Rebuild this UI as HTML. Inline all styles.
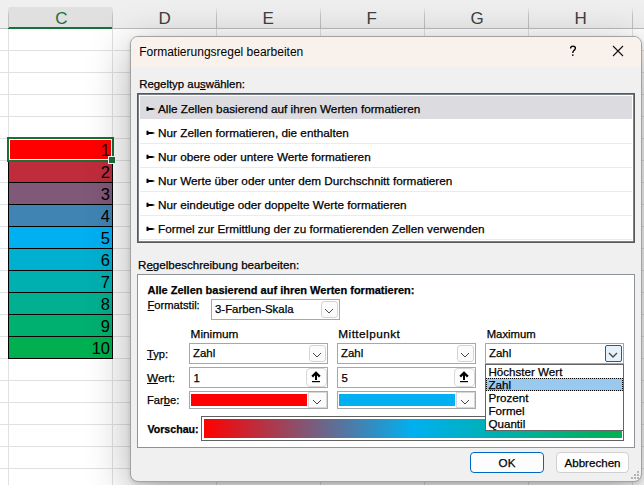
<!DOCTYPE html>
<html><head><meta charset="utf-8"><style>
html,body{margin:0;padding:0;width:644px;height:485px;overflow:hidden;background:#fff;position:relative}
div{position:absolute}
.t{white-space:pre;font-family:"Liberation Sans",sans-serif;-webkit-text-stroke:0.25px currentColor}
u{text-decoration:underline;text-underline-offset:0.5px}
</style></head><body>
<div style="left:0px;top:0px;width:644px;height:29px;background:#efefef"></div>
<div style="left:8px;top:7px;width:104px;height:20px;background:#e0e0e0"></div>
<div style="left:8px;top:27px;width:104px;height:2px;background:#137339"></div>
<div style="left:8px;top:7px;width:1px;height:21px;background:linear-gradient(#efefef,#c4c4c4 40%,#bdbdbd)"></div>
<div style="left:112px;top:7px;width:1px;height:21px;background:linear-gradient(#efefef,#c4c4c4 40%,#bdbdbd)"></div>
<div style="left:216px;top:7px;width:1px;height:21px;background:linear-gradient(#efefef,#c4c4c4 40%,#bdbdbd)"></div>
<div style="left:320px;top:7px;width:1px;height:21px;background:linear-gradient(#efefef,#c4c4c4 40%,#bdbdbd)"></div>
<div style="left:424px;top:7px;width:1px;height:21px;background:linear-gradient(#efefef,#c4c4c4 40%,#bdbdbd)"></div>
<div style="left:528px;top:7px;width:1px;height:21px;background:linear-gradient(#efefef,#c4c4c4 40%,#bdbdbd)"></div>
<div style="left:632px;top:7px;width:1px;height:21px;background:linear-gradient(#efefef,#c4c4c4 40%,#bdbdbd)"></div>
<div style="left:0px;top:28px;width:8px;height:1px;background:#bdbdbd"></div>
<div style="left:112px;top:28px;width:532px;height:1px;background:#bdbdbd"></div>
<div class="t" style="left:55.3px;top:8.46px;font-size:17px;line-height:22.1px;font-weight:normal;color:#1e6e3c;letter-spacing:0px;-webkit-text-stroke:0">C</div>
<div class="t" style="left:158.5px;top:8.46px;font-size:17px;line-height:22.1px;font-weight:normal;color:#404040;letter-spacing:0px;-webkit-text-stroke:0">D</div>
<div class="t" style="left:262.5px;top:8.46px;font-size:17px;line-height:22.1px;font-weight:normal;color:#404040;letter-spacing:0px;-webkit-text-stroke:0">E</div>
<div class="t" style="left:366.5px;top:8.46px;font-size:17px;line-height:22.1px;font-weight:normal;color:#404040;letter-spacing:0px;-webkit-text-stroke:0">F</div>
<div class="t" style="left:470.5px;top:8.46px;font-size:17px;line-height:22.1px;font-weight:normal;color:#404040;letter-spacing:0px;-webkit-text-stroke:0">G</div>
<div class="t" style="left:574.5px;top:8.46px;font-size:17px;line-height:22.1px;font-weight:normal;color:#404040;letter-spacing:0px;-webkit-text-stroke:0">H</div>
<div style="left:8px;top:29px;width:1px;height:456px;background:#e1e1e1"></div>
<div style="left:112px;top:29px;width:1px;height:456px;background:#e1e1e1"></div>
<div style="left:216px;top:29px;width:1px;height:456px;background:#e1e1e1"></div>
<div style="left:320px;top:29px;width:1px;height:456px;background:#e1e1e1"></div>
<div style="left:424px;top:29px;width:1px;height:456px;background:#e1e1e1"></div>
<div style="left:528px;top:29px;width:1px;height:456px;background:#e1e1e1"></div>
<div style="left:632px;top:29px;width:1px;height:456px;background:#e1e1e1"></div>
<div style="left:0px;top:50px;width:644px;height:1px;background:#e1e1e1"></div>
<div style="left:0px;top:72px;width:644px;height:1px;background:#e1e1e1"></div>
<div style="left:0px;top:94px;width:644px;height:1px;background:#e1e1e1"></div>
<div style="left:0px;top:116px;width:644px;height:1px;background:#e1e1e1"></div>
<div style="left:0px;top:138px;width:644px;height:1px;background:#e1e1e1"></div>
<div style="left:0px;top:160px;width:644px;height:1px;background:#e1e1e1"></div>
<div style="left:0px;top:182px;width:644px;height:1px;background:#e1e1e1"></div>
<div style="left:0px;top:204px;width:644px;height:1px;background:#e1e1e1"></div>
<div style="left:0px;top:226px;width:644px;height:1px;background:#e1e1e1"></div>
<div style="left:0px;top:248px;width:644px;height:1px;background:#e1e1e1"></div>
<div style="left:0px;top:270px;width:644px;height:1px;background:#e1e1e1"></div>
<div style="left:0px;top:292px;width:644px;height:1px;background:#e1e1e1"></div>
<div style="left:0px;top:314px;width:644px;height:1px;background:#e1e1e1"></div>
<div style="left:0px;top:336px;width:644px;height:1px;background:#e1e1e1"></div>
<div style="left:0px;top:358px;width:644px;height:1px;background:#e1e1e1"></div>
<div style="left:0px;top:380px;width:644px;height:1px;background:#e1e1e1"></div>
<div style="left:0px;top:402px;width:644px;height:1px;background:#e1e1e1"></div>
<div style="left:0px;top:424px;width:644px;height:1px;background:#e1e1e1"></div>
<div style="left:0px;top:446px;width:644px;height:1px;background:#e1e1e1"></div>
<div style="left:0px;top:468px;width:644px;height:1px;background:#e1e1e1"></div>
<div style="left:8px;top:138px;width:105px;height:23px;background:#ff0000;box-sizing:border-box;border:1px solid #000"></div>
<div class="t" style="left:8px;top:139.78px;width:102px;text-align:right;font-size:16.5px;line-height:21px;color:#000;-webkit-text-stroke:0">1</div>
<div style="left:8px;top:160px;width:105px;height:23px;background:#bf2c3c;box-sizing:border-box;border:1px solid #000"></div>
<div class="t" style="left:8px;top:161.78px;width:102px;text-align:right;font-size:16.5px;line-height:21px;color:#000;-webkit-text-stroke:0">2</div>
<div style="left:8px;top:182px;width:105px;height:23px;background:#805878;box-sizing:border-box;border:1px solid #000"></div>
<div class="t" style="left:8px;top:183.78px;width:102px;text-align:right;font-size:16.5px;line-height:21px;color:#000;-webkit-text-stroke:0">3</div>
<div style="left:8px;top:204px;width:105px;height:23px;background:#4084b4;box-sizing:border-box;border:1px solid #000"></div>
<div class="t" style="left:8px;top:205.78px;width:102px;text-align:right;font-size:16.5px;line-height:21px;color:#000;-webkit-text-stroke:0">4</div>
<div style="left:8px;top:226px;width:105px;height:23px;background:#00b0f0;box-sizing:border-box;border:1px solid #000"></div>
<div class="t" style="left:8px;top:227.78px;width:102px;text-align:right;font-size:16.5px;line-height:21px;color:#000;-webkit-text-stroke:0">5</div>
<div style="left:8px;top:248px;width:105px;height:23px;background:#00b0d0;box-sizing:border-box;border:1px solid #000"></div>
<div class="t" style="left:8px;top:249.78px;width:102px;text-align:right;font-size:16.5px;line-height:21px;color:#000;-webkit-text-stroke:0">6</div>
<div style="left:8px;top:270px;width:105px;height:23px;background:#00b0b0;box-sizing:border-box;border:1px solid #000"></div>
<div class="t" style="left:8px;top:271.78px;width:102px;text-align:right;font-size:16.5px;line-height:21px;color:#000;-webkit-text-stroke:0">7</div>
<div style="left:8px;top:292px;width:105px;height:23px;background:#00b090;box-sizing:border-box;border:1px solid #000"></div>
<div class="t" style="left:8px;top:293.78px;width:102px;text-align:right;font-size:16.5px;line-height:21px;color:#000;-webkit-text-stroke:0">8</div>
<div style="left:8px;top:314px;width:105px;height:23px;background:#00b070;box-sizing:border-box;border:1px solid #000"></div>
<div class="t" style="left:8px;top:315.78px;width:102px;text-align:right;font-size:16.5px;line-height:21px;color:#000;-webkit-text-stroke:0">9</div>
<div style="left:8px;top:336px;width:105px;height:23px;background:#00b050;box-sizing:border-box;border:1px solid #000"></div>
<div class="t" style="left:8px;top:337.78px;width:102px;text-align:right;font-size:16.5px;line-height:21px;color:#000;-webkit-text-stroke:0">10</div>
<div style="left:7px;top:137px;width:107px;height:25px;box-sizing:border-box;border:2px solid #137339"></div>
<div style="left:9px;top:139px;width:103px;height:21px;box-sizing:border-box;border:1px solid #fff"></div>
<div style="left:109px;top:157px;width:6px;height:6px;background:#137339;outline:1px solid #fff"></div>
<div style="left:130px;top:36px;width:512px;height:446px;border-radius:8px;box-shadow:0 10px 44px rgba(0,0,0,0.32),0 2px 4px rgba(0,0,0,0.14);background:#f0f0f0;box-sizing:border-box;border:1px solid #a2a2a2;overflow:hidden"><div style="left:0;top:0;width:510px;height:30px;background:#f9f1ec"></div></div>
<div class="t" style="left:139.2px;top:45.04px;font-size:12px;line-height:15.6px;font-weight:normal;color:#000;letter-spacing:0px;-webkit-text-stroke:0">Formatierungsregel bearbeiten</div>
<svg style="position:absolute;left:569px;top:45px" width="9" height="12" viewBox="0 0 9 12"><path d="M1.6 3.4C1.6 2 2.6 1.1 3.9 1.1C5.3 1.1 6.4 2 6.4 3.3C6.4 4.5 5.6 5 4.9 5.6C4.2 6.2 3.8 6.7 3.8 7.9" stroke="#000" stroke-width="1.35" fill="none"/><circle cx="3.8" cy="10.1" r="0.85" fill="#000"/></svg>
<svg style="position:absolute;left:612px;top:45px" width="12" height="12" viewBox="0 0 12 12"><path d="M1 1L11 11M11 1L1 11" stroke="#111" stroke-width="1.1" fill="none"/></svg>
<div class="t" style="left:139.2px;top:76.64px;font-size:11.4px;line-height:14.82px;font-weight:normal;color:#000;letter-spacing:0px;">Regeltyp au<u>s</u>wählen:</div>
<div style="left:137px;top:93px;width:498px;height:150px;box-sizing:border-box;border:1px solid #585858;box-shadow:inset 0 0 0 1px #7a8088;background:#fff"></div>
<div style="left:140px;top:96px;width:492px;height:23px;background:#dcdce0"></div>
<svg style="position:absolute;left:146px;top:106px" width="10" height="6" viewBox="0 0 10 6"><path d="M0.5 0.8H2.5V2.05H6.2L9.4 2.9V3.1L6.2 3.95H2.5V5.1H0.5Z" fill="#000"/></svg>
<div class="t" style="left:158px;top:100.69px;font-size:11.75px;line-height:15.28px;font-weight:normal;color:#000;letter-spacing:0px;">Alle Zellen basierend auf ihren Werten formatieren</div>
<div style="left:140px;top:143px;width:492px;height:1px;background:#ebebeb"></div>
<svg style="position:absolute;left:146px;top:130px" width="10" height="6" viewBox="0 0 10 6"><path d="M0.5 0.8H2.5V2.05H6.2L9.4 2.9V3.1L6.2 3.95H2.5V5.1H0.5Z" fill="#000"/></svg>
<div class="t" style="left:158px;top:124.69px;font-size:11.75px;line-height:15.28px;font-weight:normal;color:#000;letter-spacing:0px;">Nur Zellen formatieren, die enthalten</div>
<div style="left:140px;top:167px;width:492px;height:1px;background:#ebebeb"></div>
<svg style="position:absolute;left:146px;top:154px" width="10" height="6" viewBox="0 0 10 6"><path d="M0.5 0.8H2.5V2.05H6.2L9.4 2.9V3.1L6.2 3.95H2.5V5.1H0.5Z" fill="#000"/></svg>
<div class="t" style="left:158px;top:148.69px;font-size:11.75px;line-height:15.28px;font-weight:normal;color:#000;letter-spacing:0px;">Nur obere oder untere Werte formatieren</div>
<div style="left:140px;top:191px;width:492px;height:1px;background:#ebebeb"></div>
<svg style="position:absolute;left:146px;top:178px" width="10" height="6" viewBox="0 0 10 6"><path d="M0.5 0.8H2.5V2.05H6.2L9.4 2.9V3.1L6.2 3.95H2.5V5.1H0.5Z" fill="#000"/></svg>
<div class="t" style="left:158px;top:172.69px;font-size:11.75px;line-height:15.28px;font-weight:normal;color:#000;letter-spacing:0px;">Nur Werte über oder unter dem Durchschnitt formatieren</div>
<div style="left:140px;top:215px;width:492px;height:1px;background:#ebebeb"></div>
<svg style="position:absolute;left:146px;top:202px" width="10" height="6" viewBox="0 0 10 6"><path d="M0.5 0.8H2.5V2.05H6.2L9.4 2.9V3.1L6.2 3.95H2.5V5.1H0.5Z" fill="#000"/></svg>
<div class="t" style="left:158px;top:196.69px;font-size:11.75px;line-height:15.28px;font-weight:normal;color:#000;letter-spacing:0px;">Nur eindeutige oder doppelte Werte formatieren</div>
<div style="left:140px;top:239px;width:492px;height:1px;background:#ebebeb"></div>
<svg style="position:absolute;left:146px;top:226px" width="10" height="6" viewBox="0 0 10 6"><path d="M0.5 0.8H2.5V2.05H6.2L9.4 2.9V3.1L6.2 3.95H2.5V5.1H0.5Z" fill="#000"/></svg>
<div class="t" style="left:158px;top:220.69px;font-size:11.75px;line-height:15.28px;font-weight:normal;color:#000;letter-spacing:0px;">Formel zur Ermittlung der zu formatierenden Zellen verwenden</div>
<div class="t" style="left:138px;top:256.64px;font-size:11.6px;line-height:15.08px;font-weight:normal;color:#000;letter-spacing:0px;">R<u>e</u>gelbeschreibung bearbeiten:</div>
<div style="left:137px;top:274px;width:498px;height:174px;box-sizing:border-box;border:1px solid #8e939a;background:#fff"></div>
<div class="t" style="left:147.5px;top:282.54px;font-size:11px;line-height:14.3px;font-weight:bold;color:#000;letter-spacing:0px;">Alle Zellen basierend auf ihren Werten formatieren:</div>
<div class="t" style="left:147.5px;top:298.34px;font-size:11.2px;line-height:14.56px;font-weight:normal;color:#000;letter-spacing:0px;"><u>F</u>ormatstil:</div>
<div style="left:211px;top:299px;width:129px;height:21px;box-sizing:border-box;border:1px solid #a6a6ae;background:#fff"></div>
<div class="t" style="left:215px;top:301.84px;font-size:11.4px;line-height:14.82px;font-weight:normal;color:#000;letter-spacing:0px;">3-Farben-Skala</div>
<div style="left:321px;top:301px;width:17px;height:17px;box-sizing:border-box;border:1px solid #d4d4d4;border-radius:3px;background:#fbfbfb"></div>
<svg style="position:absolute;left:324px;top:308px" width="11" height="7" viewBox="0 0 11 7"><path d="M1 1L5 5L9 1" stroke="#474747" stroke-width="1.0" fill="none"/></svg>
<div class="t" style="left:190.6px;top:326.84px;font-size:11.8px;line-height:15.34px;font-weight:normal;color:#000;letter-spacing:0px;">Minimum</div>
<div class="t" style="left:338.3px;top:326.84px;font-size:11.8px;line-height:15.34px;font-weight:normal;color:#000;letter-spacing:0.45px;">Mittelpunkt</div>
<div class="t" style="left:486.7px;top:327.34px;font-size:11.3px;line-height:14.69px;font-weight:normal;color:#000;letter-spacing:0px;">Maximum</div>
<div class="t" style="left:147px;top:346.54px;font-size:11.2px;line-height:14.56px;font-weight:normal;color:#000;letter-spacing:0px;"><u>T</u>yp:</div>
<div class="t" style="left:147px;top:371.14px;font-size:11.8px;line-height:15.34px;font-weight:normal;color:#000;letter-spacing:0px;"><u>W</u>ert:</div>
<div class="t" style="left:147px;top:393.44px;font-size:11.2px;line-height:14.56px;font-weight:normal;color:#000;letter-spacing:0px;">Far<u>b</u>e:</div>
<div class="t" style="left:147.5px;top:422.64px;font-size:10.6px;line-height:13.78px;font-weight:bold;color:#000;letter-spacing:0px;">Vorschau:</div>
<div style="left:189px;top:343px;width:139px;height:21px;box-sizing:border-box;border:1px solid #a6a6ae;background:#fff"></div>
<div class="t" style="left:193px;top:345.84px;font-size:11.4px;line-height:14.82px;font-weight:normal;color:#000;letter-spacing:0px;">Zahl</div>
<div style="left:309px;top:345px;width:17px;height:17px;box-sizing:border-box;border:1px solid #d4d4d4;border-radius:3px;background:#fbfbfb"></div>
<svg style="position:absolute;left:312px;top:352px" width="11" height="7" viewBox="0 0 11 7"><path d="M1 1L5 5L9 1" stroke="#474747" stroke-width="1.0" fill="none"/></svg>
<div style="left:189px;top:367px;width:139px;height:21px;box-sizing:border-box;border:1px solid #a6a6ae;background:#fff"></div>
<div class="t" style="left:193.5px;top:371.44px;font-size:11.4px;line-height:14.82px;font-weight:normal;color:#000;letter-spacing:0px;">1</div>
<div style="left:306px;top:368px;width:21px;height:19px;box-sizing:border-box;border:1px solid #d8d8d8;border-radius:4px;background:#fdfdfd"></div>
<svg style="position:absolute;left:311px;top:371px" width="10" height="13" viewBox="0 0 10 13"><path d="M1.2 5.6L5 1.8L8.8 5.6" stroke="#000" stroke-width="2.3" fill="none"/><path d="M5 0.7L6.2 1.9H3.8Z" fill="#000"/><rect x="4" y="2" width="2" height="7" fill="#000"/><rect x="1" y="10" width="8" height="1.2" fill="#000"/></svg>
<div style="left:189px;top:391px;width:139px;height:18px;box-sizing:border-box;border:1px solid #a6a6ae;background:#fff"></div>
<div style="left:191px;top:394px;width:116px;height:12px;background:#ff0000"></div>
<div style="left:308px;top:392px;width:19px;height:16px;box-sizing:border-box;border:1px solid #d8d8d8;background:#fbfbfb"></div>
<svg style="position:absolute;left:312px;top:399px" width="11" height="7" viewBox="0 0 11 7"><path d="M1 1L5 5L9 1" stroke="#474747" stroke-width="1.0" fill="none"/></svg>
<div style="left:337px;top:343px;width:139px;height:21px;box-sizing:border-box;border:1px solid #a6a6ae;background:#fff"></div>
<div class="t" style="left:341px;top:345.84px;font-size:11.4px;line-height:14.82px;font-weight:normal;color:#000;letter-spacing:0px;">Zahl</div>
<div style="left:457px;top:345px;width:17px;height:17px;box-sizing:border-box;border:1px solid #d4d4d4;border-radius:3px;background:#fbfbfb"></div>
<svg style="position:absolute;left:460px;top:352px" width="11" height="7" viewBox="0 0 11 7"><path d="M1 1L5 5L9 1" stroke="#474747" stroke-width="1.0" fill="none"/></svg>
<div style="left:337px;top:367px;width:139px;height:21px;box-sizing:border-box;border:1px solid #a6a6ae;background:#fff"></div>
<div class="t" style="left:341.5px;top:371.44px;font-size:11.4px;line-height:14.82px;font-weight:normal;color:#000;letter-spacing:0px;">5</div>
<div style="left:454px;top:368px;width:21px;height:19px;box-sizing:border-box;border:1px solid #d8d8d8;border-radius:4px;background:#fdfdfd"></div>
<svg style="position:absolute;left:459px;top:371px" width="10" height="13" viewBox="0 0 10 13"><path d="M1.2 5.6L5 1.8L8.8 5.6" stroke="#000" stroke-width="2.3" fill="none"/><path d="M5 0.7L6.2 1.9H3.8Z" fill="#000"/><rect x="4" y="2" width="2" height="7" fill="#000"/><rect x="1" y="10" width="8" height="1.2" fill="#000"/></svg>
<div style="left:337px;top:391px;width:139px;height:18px;box-sizing:border-box;border:1px solid #a6a6ae;background:#fff"></div>
<div style="left:339px;top:394px;width:116px;height:12px;background:#00b0f0"></div>
<div style="left:456px;top:392px;width:19px;height:16px;box-sizing:border-box;border:1px solid #d8d8d8;background:#fbfbfb"></div>
<svg style="position:absolute;left:460px;top:399px" width="11" height="7" viewBox="0 0 11 7"><path d="M1 1L5 5L9 1" stroke="#474747" stroke-width="1.0" fill="none"/></svg>
<div style="left:485px;top:343px;width:139px;height:21px;box-sizing:border-box;border:1px solid #a6a6ae;background:#fff"></div>
<div class="t" style="left:489px;top:345.84px;font-size:11.4px;line-height:14.82px;font-weight:normal;color:#000;letter-spacing:0px;">Zahl</div>
<div style="left:605px;top:345px;width:17px;height:17px;box-sizing:border-box;border:1px solid #0067c0;border-radius:2px;background:#e5f1fb"></div>
<svg style="position:absolute;left:608px;top:352px" width="11" height="7" viewBox="0 0 11 7"><path d="M1 1L5 5L9 1" stroke="#474747" stroke-width="1.3" fill="none"/></svg>
<div style="left:201px;top:416px;width:423px;height:25px;box-sizing:border-box;border:1px solid #606060;background:#fff"></div>
<div style="left:204px;top:419px;width:418px;height:19px;background:linear-gradient(90deg,#ff0000,#00b0f0 50%,#00b050)"></div>
<div style="left:485px;top:364px;width:139px;height:67px;box-sizing:border-box;border:1px solid #646464;background:#fff"></div>
<div style="left:486px;top:378px;width:137px;height:13px;background:#99c9ef;box-sizing:border-box;border:1px dotted #000"></div>
<div class="t" style="left:488.5px;top:364.24px;font-size:11.6px;line-height:15.08px;font-weight:normal;color:#000;letter-spacing:0px;">Höchster Wert</div>
<div class="t" style="left:488.5px;top:377.24px;font-size:11.6px;line-height:15.08px;font-weight:normal;color:#000;letter-spacing:0px;">Zahl</div>
<div class="t" style="left:488.5px;top:390.24px;font-size:11.6px;line-height:15.08px;font-weight:normal;color:#000;letter-spacing:0px;">Prozent</div>
<div class="t" style="left:488.5px;top:403.24px;font-size:11.6px;line-height:15.08px;font-weight:normal;color:#000;letter-spacing:0px;">Formel</div>
<div class="t" style="left:488.5px;top:416.24px;font-size:11.6px;line-height:15.08px;font-weight:normal;color:#000;letter-spacing:0px;">Quantil</div>
<div style="left:470px;top:452px;width:74px;height:21px;box-sizing:border-box;border:1px solid #0067c0;border-radius:4px;background:#fdfdfd"></div>
<div class="t" style="left:470px;top:452px;width:74px;text-align:center;font-size:11.6px;line-height:21px">OK</div>
<div style="left:556px;top:452px;width:73px;height:21px;box-sizing:border-box;border:1px solid #d0d0d0;border-radius:4px;background:#fdfdfd"></div>
<div class="t" style="left:556px;top:452px;width:73px;text-align:center;font-size:11.6px;line-height:21px">Abbrechen</div>
<div style="left:637px;top:471px;width:2px;height:2px;background:#b4b4b4"></div>
<div style="left:634px;top:474px;width:2px;height:2px;background:#b4b4b4"></div>
<div style="left:637px;top:474px;width:2px;height:2px;background:#b4b4b4"></div>
<div style="left:631px;top:477px;width:2px;height:2px;background:#b4b4b4"></div>
<div style="left:634px;top:477px;width:2px;height:2px;background:#b4b4b4"></div>
<div style="left:637px;top:477px;width:2px;height:2px;background:#b4b4b4"></div>
</body></html>
